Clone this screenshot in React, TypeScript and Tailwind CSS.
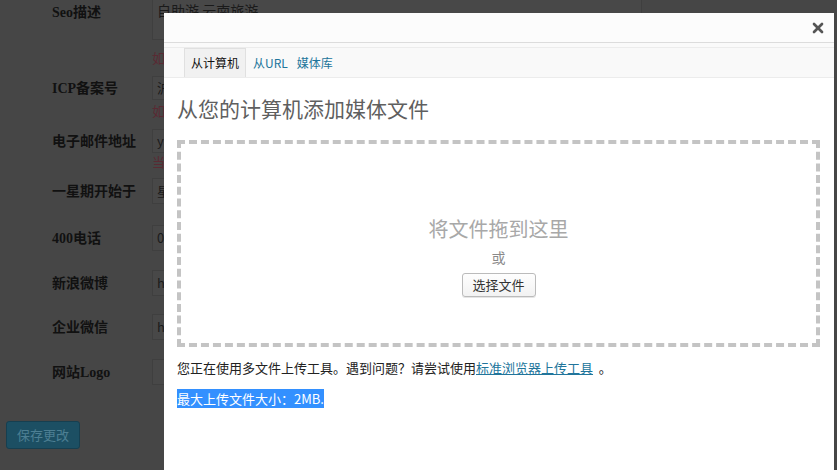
import { X } from 'lucide-react';

const lowerRows = [
    { label: '一星期开始于', value: '星', gap: 'mt-[8px]' },
    { label: '400电话', value: '0', gap: 'mt-[21px]' },
    { label: '新浪微博', value: 'h', gap: 'mt-[19px]' },
    { label: '企业微信', value: 'h', gap: 'mt-[18px]' },
    { label: '网站Logo', value: '', gap: 'mt-[19px]' },
];

const labelCls = "w-[146px] pl-[46px] text-[14px] font-bold text-[#111] font-['Liberation_Serif','Noto_Sans_CJK_SC',serif]";
const inputCls = 'w-[490px] border border-[#3f3f3f] bg-[#484848] pl-[4px] text-[13px] text-[#1a1a1a]';

const SettingsPage = () => {
    return (
        <div className="w-full h-full bg-[#464646] pl-[6px] font-['Noto_Sans_CJK_SC',sans-serif]">
            <div className="flex flex-col">
                <div className="flex h-[50px]">
                    <div className={`${labelCls} pt-[2px]`}>Seo描述</div>
                    <div className={`${inputCls} h-[42px] -mt-[2px] text-[14px] leading-[22px]`}>自助游 云南旅游</div>
                </div>
                <div className="pl-[146px] text-[13px] text-[#5a2a33] h-[16px] leading-[16px]">如</div>
                <div className="flex items-center mt-[9px] h-[26px]">
                    <div className={labelCls}>ICP备案号</div>
                    <div className={`${inputCls} h-[24px] leading-[22px]`}>沪</div>
                </div>
                <div className="pl-[146px] text-[13px] text-[#5a2a33] h-[16px] leading-[16px] mt-[2px]">如</div>
                <div className="flex items-center mt-[9px] h-[26px]">
                    <div className={labelCls}>电子邮件地址</div>
                    <div className={`${inputCls} h-[24px] leading-[22px]`}>y</div>
                </div>
                <div className="pl-[146px] text-[13px] text-[#5a2a33] h-[16px] leading-[16px]">当</div>
                {lowerRows.map((r) => (
                    <div key={r.label} className={`flex items-center h-[26px] ${r.gap}`}>
                        <div className={labelCls}>{r.label}</div>
                        <div className={`${inputCls} h-[26px] leading-[24px]`}>{r.value}</div>
                    </div>
                ))}
                <div className="mt-[36px]">
                    <div className="w-[74px] h-[28px] rounded-[3px] bg-[#1c4f63] border border-[#163f50] text-[13px] text-[#4d7f93] flex items-center justify-center">保存更改</div>
                </div>
            </div>
        </div>
    );
};

const MediaModal = () => {
    return (
        <div className="absolute left-[164px] top-[13px] right-[3px] bottom-0 bg-white flex flex-col font-['Noto_Sans_CJK_SC',sans-serif]">
            <div className="h-[30px] bg-[#fcfcfc] border-b border-[#dcdcdc] flex items-center justify-end pr-[8px]">
                <X className="w-[16px] h-[16px] text-[#555]" strokeWidth={4} />
            </div>
            <div className="h-[4px] bg-[#fafafa]" />
            <div className="h-[31px] bg-[#f9f9f9] border-t border-[#ececec] border-b border-[#dfdfdf] flex items-end pl-[20px] gap-[7px] text-[12px]">
                <div className="h-[29px] px-[6px] bg-[#f1f1f1] border border-b-0 border-[#e0e0e0] flex items-center text-[#111]">从计算机</div>
                <div className="h-[29px] flex items-center text-[#21759b]">从URL</div>
                <div className="h-[29px] flex items-center text-[#21759b] ml-[2px]">媒体库</div>
            </div>
            <div className="pl-[13px] pr-[14px]">
                <h1 className="mt-[16px] text-[21px] leading-[28px] text-[#5f5f5f]">从您的计算机添加媒体文件</h1>
                <div className="mt-[18px] h-[207px] border-4 border-dashed border-[#c4c4c4] flex flex-col items-center pt-[72px]">
                    <div className="text-[20px] leading-[26px] text-[#a8a8a8]">将文件拖到这里</div>
                    <div className="mt-[6px] text-[14px] leading-[18px] text-[#8a8a8a]">或</div>
                    <button className="mt-[7px] w-[74px] h-[24px] rounded-[3px] border border-[#bbb] bg-gradient-to-b from-[#fefefe] to-[#f2f2f2] text-[13px] text-[#333] shadow-[0_1px_0_#e5e5e5]">选择文件</button>
                </div>
                <p className="mt-[12px] text-[13px] leading-[18px] text-[#222]">
                    您正在使用多文件上传工具。遇到问题？请尝试使用<a className="text-[#21759b] underline">标准浏览器上传工具</a>&nbsp;&nbsp;。
                </p>
                <p className="mt-[13px] text-[13px] leading-[17px]">
                    <span className="bg-[#3390ff] text-white">最大上传文件大小：2MB.</span>
                </p>
            </div>
        </div>
    );
};

export default function App() {
    return (
        <div className="relative w-[837px] h-[470px] overflow-hidden">
            <SettingsPage />
            <MediaModal />
        </div>
    );
}
